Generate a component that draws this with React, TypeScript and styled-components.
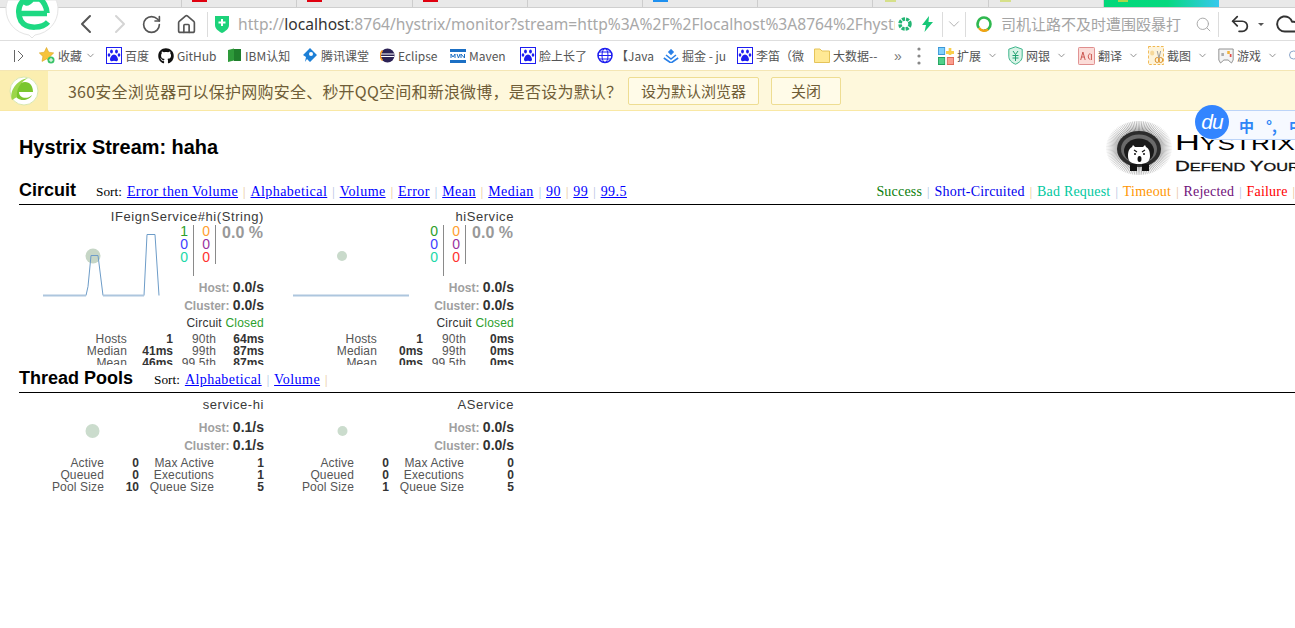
import React from "react";
import styled, { createGlobalStyle } from "styled-components";
import { ChevronLeft, ChevronRight, ChevronDown, RotateCw, Home, Search, Undo2, Cloud } from "lucide-react";
import { FaGithub } from "react-icons/fa";

const Global = createGlobalStyle`
  html, body { margin: 0; padding: 0; background: #fff; overflow: hidden; }
  body { width: 1295px; height: 628px; font-family: "Liberation Sans", Arial, sans-serif; }
  * { box-sizing: border-box; }
`;

const CJK = `"Noto Sans CJK SC", "Noto Sans", sans-serif`;

const Shell = styled.div`
  position: relative;
  width: 1295px;
  height: 628px;
  overflow: hidden;
`;

/* ---------- tab strip ---------- */
const TabStrip = styled.div`
  display: flex;
  height: 8px;
  padding-left: 67px;
  background: #e9e9e9;
  border-bottom: 1px solid #cfcfcf;
`;
const Tab = styled.div<{ $active?: boolean }>`
  position: relative;
  flex: none;
  width: 115.2px;
  height: 7px;
  border-right: ${(p) => (p.$active ? "0" : "1px solid #cdcdcd")};
  background: ${(p) => (p.$active ? "linear-gradient(90deg,#02d87a 0%,#06d97f 55%,#38c8ee 100%)" : "transparent")};
`;
const TabFavicon = styled.span<{ $c: string; $left: number; $w: number }>`
  position: absolute;
  top: 0;
  left: ${(p) => p.$left}px;
  width: ${(p) => p.$w}px;
  height: 1.5px;
  background: ${(p) => p.$c};
`;

/* ---------- toolbar ---------- */
const Toolbar = styled.div`
  display: flex;
  align-items: center;
  height: 33px;
  padding-left: 76px;
  background: #fff;
  border-bottom: 1px solid #dedede;
  color: #555;
`;
const NavButton = styled.div<{ $w: number; $c?: string }>`
  display: flex;
  flex: none;
  align-items: center;
  justify-content: center;
  width: ${(p) => p.$w}px;
  color: ${(p) => p.$c || "#555"};
  & > svg { flex: none; }
`;
const VDivider = styled.div<{ $ml?: number }>`
  flex: none;
  width: 1px;
  height: 25px;
  margin-left: ${(p) => p.$ml || 0}px;
  background: #dcdcdc;
`;
const ShieldWrap = styled.div`
  display: flex;
  flex: none;
  width: 23px;
  margin-left: 7px;
`;
const Url = styled.div`
  flex: none;
  width: 657px;
  overflow: hidden;
  white-space: nowrap;
  font-family: "Noto Sans", sans-serif;
  font-size: 15.6px;
  line-height: 20px;
  color: #a8a8a8;
`;
const UrlHost = styled.span`
  color: #333;
`;
const UrlTools = styled.div`
  display: flex;
  flex: none;
  align-items: center;
  gap: 10px;
  margin-left: 3px;
  width: 44px;
`;
const SearchBox = styled.div`
  display: flex;
  flex: none;
  align-items: center;
  width: 252px;
  padding-left: 9px;
`;
const SearchText = styled.span`
  flex: none;
  margin-left: 8px;
  width: 188px;
  overflow: hidden;
  white-space: nowrap;
  font-family: ${CJK};
  font-size: 15px;
  line-height: 20px;
  color: #a4a4a4;
`;
const Caret = styled.span`
  flex: none;
  width: 0;
  height: 0;
  border-left: 3px solid transparent;
  border-right: 3px solid transparent;
  border-top: 3px solid #555;
`;

/* ---------- bookmarks ---------- */
const BookmarkBar = styled.div`
  display: flex;
  align-items: center;
  height: 29px;
  background: #fff;
`;
const BarToggle = styled.div`
  display: flex;
  flex: none;
  width: 39px;
  padding-left: 13px;
`;
const Bookmark = styled.div<{ $w: number }>`
  display: flex;
  flex: none;
  align-items: center;
  gap: 3px;
  width: ${(p) => p.$w}px;
  font-family: ${CJK};
  font-size: 12px;
  color: #555;
  white-space: nowrap;
  overflow: hidden;
`;
const IconSlot = styled.span`
  display: flex;
  flex: none;
  width: 16px;
  height: 17px;
  align-items: center;
  justify-content: center;
`;
const More = styled.div<{ $w: number }>`
  display: flex;
  flex: none;
  justify-content: center;
  width: ${(p) => p.$w}px;
  font-family: "Liberation Sans", sans-serif;
  font-size: 14px;
  color: #777;
`;
const Tool = styled.div<{ $w: number }>`
  display: flex;
  align-items: center;
  gap: 3px;
  flex: none;
  width: ${(p) => p.$w}px;
  font-family: ${CJK};
  font-size: 12px;
  color: #555;
  white-space: nowrap;
`;
const ToolChevron = styled.span<{ $ml: number }>`
  display: flex;
  margin-left: ${(p) => p.$ml}px;
  color: #888;
`;

/* ---------- info bar ---------- */
const InfoBar = styled.div`
  display: flex;
  align-items: center;
  height: 41px;
  background: #fef8dc;
  border-top: 1px solid #f4e6b4;
  border-bottom: 1px solid #f9e8a4;
`;
const InfoIcon = styled.div`
  display: flex;
  flex: none;
  align-items: center;
  justify-content: center;
  width: 48px;
  height: 100%;
  background: #fbeeb0;
`;
const InfoText = styled.div`
  flex: none;
  margin-left: 20px;
  width: 560px;
  font-family: ${CJK};
  font-size: 16px;
  letter-spacing: 0.22px;
  color: #6f5d37;
  white-space: nowrap;
`;
const InfoButton = styled.div<{ $w: number }>`
  display: flex;
  flex: none;
  align-items: center;
  justify-content: center;
  width: ${(p) => p.$w}px;
  height: 28px;
  margin-right: 12px;
  background: #fffbe8;
  border: 1px solid #eedd92;
  border-radius: 2px;
  font-family: ${CJK};
  font-size: 15px;
  color: #6f5d37;
`;

/* ---------- hystrix page ---------- */
const Header = styled.div`
  display: flex;
  align-items: flex-start;
  justify-content: space-between;
  height: 67px;
  padding-left: 19px;
`;
const Title = styled.h2`
  margin: 24px 0 0;
  font-size: 19.9px;
  line-height: 24px;
  font-weight: bold;
  color: #000;
`;
const LogoSvg = styled.svg`
  display: block;
  flex: none;
  margin-top: 7px;
`;
const Menu = styled.div<{ $h: number }>`
  display: flex;
  align-items: center;
  height: ${(p) => p.$h}px;
  margin-left: 19px;
  border-bottom: 1px solid #000;
  font-family: "Liberation Serif", "Times New Roman", serif;
  font-size: 13.3px;
  white-space: nowrap;
`;
const MenuTitle = styled.h3<{ $w: number }>`
  margin: 0 0 2px;
  width: ${(p) => p.$w}px;
  font-family: "Liberation Sans", Arial, sans-serif;
  font-size: 18px;
  line-height: 22px;
  font-weight: bold;
  color: #000;
  flex: none;
`;
const Sort = styled.div`
  margin-top: 2px;
  color: #000;
`;
const SortLabel = styled.span`
  margin-right: 5px;
`;
const MenuLink = styled.a`
  color: #00f;
  font-size: 14px;
  letter-spacing: 0.44px;
  text-decoration: underline;
`;
const Sep = styled.span<{ $c: string }>`
  margin: 0 5px;
  color: ${(p) => p.$c};
  font-size: 12px;
`;
const Legend = styled.div`
  margin-left: auto;
  margin-right: -5px;
  margin-top: 2px;
`;
const LegendItem = styled.span<{ $c: string }>`
  color: ${(p) => p.$c};
  font-size: 14px;
  letter-spacing: 0.2px;
`;
const Monitors = styled.div<{ $h: number }>`
  display: flex;
  height: ${(p) => p.$h}px;
  overflow: hidden;
  margin-left: 19px;
`;
const Card = styled.div`
  width: 250px;
  padding-right: 5px;
  overflow: hidden;
  flex: none;
  color: #333;
`;
const CardTitle = styled.div`
  height: 14px;
  margin-top: 5px;
  text-align: right;
  font-size: 13px;
  line-height: 14px;
  letter-spacing: 0.57px;
  color: #3a3a3a;
  white-space: nowrap;
`;
const Mid = styled.div`
  display: flex;
  height: 108px;
`;
const ChartSvg = styled.svg`
  display: block;
  flex: none;
`;
const DataCol = styled.div`
  flex: 1;
  display: flex;
  flex-direction: column;
  align-items: flex-end;
`;
const Counters = styled.div`
  display: flex;
  height: 52px;
  width: 100%;
  justify-content: flex-end;
  margin-top: 1px;
`;
const CounterCol = styled.div<{ $h: number; $w: number }>`
  width: ${(p) => p.$w}px;
  height: ${(p) => p.$h}px;
  padding-right: 5px;
  text-align: right;
  border-right: 1px solid #8a8a8a;
  font-size: 14px;
  line-height: 13px;
`;
const Num = styled.div<{ $c: string }>`
  color: ${(p) => p.$c};
`;
const Rate = styled.div`
  flex: none;
  width: 47px;
  margin-right: 1px;
  text-align: right;
  font-size: 16px;
  line-height: 16px;
  font-weight: bold;
  color: #999;
  white-space: nowrap;
`;
const RateRow = styled.div<{ $mt?: number }>`
  margin-top: ${(p) => p.$mt || 0}px;
  height: 18px;
  line-height: 18px;
  font-size: 14px;
  font-weight: bold;
  color: #333;
  white-space: nowrap;
`;
const RateLabel = styled.span`
  font-size: 12px;
  color: #a0a0a0;
`;
const CircuitState = styled.div`
  margin-top: 1px;
  font-size: 12px;
  line-height: 16px;
  letter-spacing: 0.2px;
  color: #333;
  white-space: nowrap;
`;
const Closed = styled.span`
  color: #2ca02c;
`;
const Stats = styled.div<{ $cols: string; $mt?: number }>`
  display: grid;
  grid-template-columns: ${(p) => p.$cols};
  margin-top: ${(p) => p.$mt || 0}px;
  font-size: 12px;
  line-height: 12px;
  letter-spacing: 0.15px;
  text-align: right;
  color: #555;
`;
const StatValue = styled.div`
  font-weight: bold;
  color: #333;
  letter-spacing: 0;
`;
const PoolMid = styled.div`
  display: flex;
  height: 45px;
`;
const PoolData = styled.div`
  flex: 1;
  display: flex;
  flex-direction: column;
  align-items: flex-end;
  padding-top: 6px;
`;

/* ---------- overlays ---------- */
const BrandBubble = styled.svg`
  position: absolute;
  left: 0;
  top: 0;
`;
const ImeBar = styled.div`
  position: absolute;
  left: 1212px;
  top: 110px;
  width: 90px;
  height: 30px;
  display: flex;
  align-items: center;
  gap: 12px;
  padding-left: 26px;
  background: #f6f9ff;
  border: 1px solid #bcd4f8;
  border-right: 0;
  font-family: ${CJK};
  font-size: 15px;
  font-weight: bold;
  color: #2f86f6;
  white-space: nowrap;
`;
const ImeBadge = styled.div`
  position: absolute;
  left: 1195px;
  top: 105px;
  width: 34px;
  height: 34px;
  border-radius: 50%;
  background: #3385ff;
  color: #fff;
  display: flex;
  align-items: center;
  justify-content: center;
  font-family: "Liberation Sans", sans-serif;
  font-style: italic;
  font-size: 21px;
  line-height: 30px;
  letter-spacing: -1px;
`;

/* ---------- small drawn icons ---------- */
const Paw = () => (
  <svg width="16" height="17" viewBox="0 0 16 17">
    <rect x="0.5" y="0.5" width="15" height="16" fill="#fff" stroke="#1d1df0" />
    <g fill="#1d1df0">
      <ellipse cx="5.5" cy="4.5" rx="1.4" ry="2" />
      <ellipse cx="10.5" cy="4.5" rx="1.4" ry="2" />
      <ellipse cx="3" cy="8" rx="1.3" ry="1.8" />
      <ellipse cx="13" cy="8" rx="1.3" ry="1.8" />
      <path d="M8 7.5c2 0 4 3 4 5s-2 2-4 1.3c-2 .7-4 .7-4-1.3s2-5 4-5z" />
    </g>
  </svg>
);
const IbmBook = () => (
  <svg width="15" height="15" viewBox="0 0 15 15">
    <path d="M1 2l6-1.500v12L1 14z" fill="#2e9a3a" />
    <path d="M7 1h7v12H7z" fill="#1f7f2c" />
  </svg>
);
const Tencent = () => (
  <svg width="16" height="16" viewBox="0 0 16 16">
    <path d="M8 0l7 7-7 7-3-3-2 3 1-5-3-2z" fill="#1c7fd6" />
    <circle cx="9" cy="6" r="2" fill="#fff" />
  </svg>
);
const EclipseIcon = () => (
  <svg width="15" height="15" viewBox="0 0 15 15">
    <circle cx="7.5" cy="7.500" r="7" fill="#2c2255" />
    <path d="M.5 7.500a7 7 0 0 1 2-5" stroke="#f7941e" strokeWidth="1.500" fill="none" />
    <path d="M.5 7.500a7 7 0 0 0 2 5" stroke="#f7941e" strokeWidth="1.500" fill="none" />
    <rect x="1" y="5.500" width="13" height="1" fill="#fff" />
    <rect x="1" y="8" width="13" height="1" fill="#fff" />
  </svg>
);
const MavenIcon = () => (
  <svg width="16" height="14" viewBox="0 0 16 14">
    <rect x="0" y="0" width="16" height="3" fill="#1b6fc4" />
    <rect x="0" y="11" width="16" height="3" fill="#1b6fc4" />
    <path d="M1 9V5l2 3 2-3v4M7 5l1.500 4L10 5M11 9V5l3.500 4V5" stroke="#1b6fc4" strokeWidth="1" fill="none" />
  </svg>
);
const Globe = () => (
  <svg width="16" height="17" viewBox="0 0 16 17">
    <circle cx="8" cy="8.500" r="7" fill="#fff" stroke="#1d1df0" strokeWidth="1.500" />
    <ellipse cx="8" cy="8.500" rx="3" ry="7" fill="none" stroke="#1d1df0" />
    <path d="M1 8.500h14M2 5h12M2 12h12" stroke="#1d1df0" />
  </svg>
);
const Juejin = () => (
  <svg width="16" height="14" viewBox="0 0 16 14" fill="none" stroke="#2a80e8" strokeWidth="1.600">
    <path d="M8 1L6 3l2 2 2-2z" fill="#2a80e8" />
    <path d="M3 6l5 4 5-4M0.800 9l7.200 5 7.200-5" />
  </svg>
);
const Folder = () => (
  <svg width="16" height="15" viewBox="0 0 16 15">
    <path d="M.5 1h5.500l2 2h7.500v11.500H.5z" fill="#ffe995" stroke="#e5c45a" />
  </svg>
);
const FavStar = () => (
  <svg width="16" height="17" viewBox="0 0 16 17">
    <path d="M7.500 0.500l2.200 4.700 5 .7-3.600 3.500.9 5-4.500-2.400L3 14.400l.9-5L.3 5.900l5-.7z" fill="#f6c33b" stroke="#d9a520" strokeWidth=".6" />
    <circle cx="12" cy="13" r="3.500" fill="#3cc46a" />
    <path d="M12 11v4M10 13h4" stroke="#fff" />
  </svg>
);
const ExtIcon = () => (
  <svg width="16" height="18" viewBox="0 0 18 18" preserveAspectRatio="none">
    <rect x="0.500" y="0.500" width="7" height="7" fill="#7fd0fb" stroke="#3a97d8" />
    <rect x="0.500" y="10.500" width="7" height="7" fill="#4fd08a" stroke="#1fa25c" />
    <rect x="10.500" y="10.500" width="7" height="7" fill="#fb9e8f" stroke="#e06a58" />
    <path d="M12 1h3v3h3v3h-3v1h-3V7H9V4h3z" fill="#f9cf4c" />
  </svg>
);
const BankIcon = () => (
  <svg width="15" height="19" viewBox="0 0 15 19">
    <path d="M7.500 .8l6.700 2.400v7c0 4-3 6.500-6.700 8C3.800 16.700.8 14.200.8 10.200v-7z" fill="#d8f3e6" stroke="#3cb48a" />
    <path d="M5 5l2.500 3.500L10 5M4.500 9.500h6M4.500 12h6M7.500 8.500V15" stroke="#1fa070" fill="none" />
  </svg>
);
const TransIcon = () => (
  <svg width="17" height="18" viewBox="0 0 19 18" preserveAspectRatio="none">
    <rect x="0.500" y="0.500" width="18" height="17" rx="1" fill="#fbdcd8" stroke="#d88" />
    <path d="M3 13l2.500-8L8 13M4 10h3M14 7c-3-1-3.500 5-.3 5.500M15 7v6" stroke="#c9504a" fill="none" />
  </svg>
);
const CaptureIcon = () => (
  <svg width="16" height="19" viewBox="0 0 19 19" preserveAspectRatio="none">
    <rect x="0.500" y="0.500" width="18" height="18" fill="#fdf3da" stroke="#efb040" strokeDasharray="3 2" />
    <circle cx="5" cy="7" r="2.500" fill="#f6d89a" />
    <circle cx="11" cy="14" r="2.500" fill="none" stroke="#d98a20" />
    <circle cx="15" cy="14" r="2.500" fill="none" stroke="#d98a20" />
    <path d="M11 5l2 7M15 5l-2 7" stroke="#999" />
  </svg>
);
const GameIcon = () => (
  <svg width="16" height="18" viewBox="0 0 19 18" preserveAspectRatio="none">
    <path d="M1 2h17v11l-2 3-4-3H7l-4 3-2-3z" fill="#f4f4f4" stroke="#8a8a8a" />
    <rect x="4" y="6" width="3" height="3" fill="#aaa" />
    <rect x="11" y="4" width="3" height="3" fill="#f2b33c" />
    <rect x="14" y="7" width="2" height="3" fill="#e24b4b" />
  </svg>
);
const Shield = () => (
  <svg width="14" height="18" viewBox="0 0 14 18">
    <path d="M0 1h14v9c0 4-4 6.500-7 8-3-1.500-7-4-7-8z" fill="#1dd27a" />
    <path d="M7 4v7M3.500 7.500h7" stroke="#fff" strokeWidth="2" />
  </svg>
);
const Spinner = () => (
  <svg width="14" height="14" viewBox="0 0 14 14">
    <circle cx="7" cy="7" r="5" fill="none" stroke="#22b573" strokeWidth="3.500" strokeDasharray="3 1" />
  </svg>
);
const Bolt = () => (
  <svg width="11" height="16" viewBox="0 0 11 16">
    <path d="M7 0L0 9h4l-1.500 7L11 6H6.500z" fill="#16c777" />
  </svg>
);
const SearchLogo = () => (
  <svg width="18" height="18" viewBox="0 0 18 18" fill="none" strokeWidth="2.600">
    <path d="M9 2.500a6.500 6.500 0 0 1 0 13" stroke="#2fb84f" />
    <path d="M9 2.500a6.500 6.500 0 0 0-5 10.500" stroke="#2fb84f" />
    <path d="M4 13a6.500 6.500 0 0 0 9 1.500" stroke="#f2a413" />
  </svg>
);
const EBadge = () => (
  <svg width="32" height="34" viewBox="0 0 32 34">
    <circle cx="16" cy="17" r="14" fill="#fff" stroke="#d8e8b0" />
    <path d="M7 19c0-7 5-11 10-11 5 0 8 4 8 10H11c0 6 8 8 13 3-3 7-17 7-17-2z" fill="#7ac62e" />
    <path d="M4 26C1 18 8 6 20 4c-8 4-12 12-11 19z" fill="#9bd64a" />
  </svg>
);
const VDots = () => (
  <svg width="4" height="18" viewBox="0 0 4 18" fill="#888">
    <circle cx="2" cy="2" r="1.600" />
    <circle cx="2" cy="9" r="1.600" />
    <circle cx="2" cy="16" r="1.600" />
  </svg>
);

const Bubble = () => (
  <BrandBubble width="68" height="44" viewBox="0 0 68 44">
    <path d="M29 35C15 33 6 22 6 9 6 5 7 2 8 0h48c1 2 2 5 2 9 0 13-9 24-23 26l-3 3z" fill="#fff" stroke="#e4e4e4" />
    <path d="M19 13.500H47M48 22c-5 6-21 8-27-1-3-6-4-15 3-21M24 0c2 7 8-1 8-1h8c3 2 7 8 7 14" fill="none" stroke="#1dd982" strokeWidth="5.500" />
  </BrandBubble>
);

/* ---------- hystrix logo ---------- */
const spikes = Array.from({ length: 110 }, (_, i) => (i * Math.PI * 2) / 110);
const Logo = () => (
  <LogoSvg width="190" height="60" viewBox="0 0 190 60">
    <defs>
      <radialGradient id="quill" gradientUnits="userSpaceOnUse" cx="34" cy="30" r="33">
        <stop offset="0.55" stopColor="#444" />
        <stop offset="1" stopColor="#eee" />
      </radialGradient>
    </defs>
    <g stroke="url(#quill)" strokeWidth="0.600">
      {spikes.map((a, i) => (
        <line
          key={i}
          x1={34 + Math.cos(a) * 18}
          y1={30 + Math.sin(a) * 14}
          x2={34 + Math.cos(a) * 33}
          y2={30 + Math.sin(a) * 27}
        />
      ))}
    </g>
    <ellipse cx="34" cy="31" rx="22" ry="18" fill="#2c2c2c" />
    <ellipse cx="34" cy="31" rx="18" ry="14.500" fill="#6a6a6a" />
    <ellipse cx="34" cy="33" rx="15" ry="12.500" fill="#1a1a1a" />
    <path d="M23 38c0-6 2-8 4-9l1-2 2 2h8l2-2 1 2c2 1 4 3 4 9 0 6-4 8-11 8s-11-2-11-8z" fill="#fff" />
    <path d="M25 46h7v7h-7zM37 46h7v7h-7z" fill="#111" />
    <path d="M29 32l3 2M40 32l-3 2" stroke="#111" strokeWidth="1.200" />
    <circle cx="30" cy="36" r="1" fill="#111" />
    <circle cx="39" cy="36" r="1" fill="#111" />
    <ellipse cx="34.500" cy="41" rx="2" ry="3" fill="#111" />
    <g transform="translate(70 31.500) scale(1.500 1)">
      <text fontFamily="'Liberation Sans', sans-serif" fontSize="23" fill="#000">
        H<tspan fontSize="17.500">YSTRIX</tspan>
      </text>
    </g>
    <g transform="translate(70 52.500) scale(1.420 1)">
      <text fontFamily="'Liberation Sans', sans-serif" fontSize="14.500" fill="#111" stroke="#111" strokeWidth="0.300">
        D<tspan fontSize="11.500">EFEND </tspan>Y<tspan fontSize="11.500">OUR</tspan>
      </text>
    </g>
  </LogoSvg>
);

/* ---------- data ---------- */
const SEP_A = "#e8bd8a";
const SEP_B = "#a8bce0";

const bookmarks: { icon: React.ReactNode; text: string; w: number }[] = [
  { icon: <Paw />, text: "百度", w: 52 },
  { icon: <FaGithub size={16} color="#111" />, text: "GitHub", w: 68 },
  { icon: <IbmBook />, text: "IBM认知", w: 76 },
  { icon: <Tencent />, text: "腾讯课堂", w: 77 },
  { icon: <EclipseIcon />, text: "Eclipse", w: 71 },
  { icon: <MavenIcon />, text: "Maven", w: 70 },
  { icon: <Paw />, text: "脸上长了", w: 77 },
  { icon: <Globe />, text: "【Java", w: 66 },
  { icon: <Juejin />, text: "掘金 - ju", w: 74 },
  { icon: <Paw />, text: "李笛（微", w: 77 },
  { icon: <Folder />, text: "大数据--", w: 70 },
];
const tools: { icon: React.ReactNode; text: string }[] = [
  { icon: <ExtIcon />, text: "扩展" },
  { icon: <BankIcon />, text: "网银" },
  { icon: <TransIcon />, text: "翻译" },
  { icon: <CaptureIcon />, text: "截图" },
  { icon: <GameIcon />, text: "游戏" },
];
const tabFavs: (null | [string, number, number])[] = [
  null,
  ["#e0000f", 10, 15],
  ["#e0000f", 10, 15],
  ["#e0000f", 10, 15],
  null,
  ["#1e90f0", 10, 15],
  null,
  ["#d6e08a", 12, 11],
  ["#d6e08a", 11, 11],
];

const circuitCols = "108px 46px 43px 48px";
const poolCols = "85px 35px 75px 50px";

type CircuitData = {
  name: string;
  ok: string;
  chart: React.ReactNode;
  stats: [string, string, string, string][];
};
const circuits: CircuitData[] = [
  {
    name: "IFeignService#hi(String)",
    ok: "1",
    chart: (
      <ChartSvg width="150" height="108" viewBox="0 0 150 108">
        <circle cx="74" cy="32" r="7.500" fill="#c6d6c6" />
        <path d="M24 71.500H67l2-9 3-31h7l5 40h41l3-61h8l4 61" fill="none" stroke="#6d9cc8" strokeWidth="1" />
        <path d="M24 71.500H67M84 71.500h41" fill="none" stroke="#adc6de" strokeWidth="2" />
      </ChartSvg>
    ),
    stats: [
      ["Hosts", "1", "90th", "64ms"],
      ["Median", "41ms", "99th", "87ms"],
      ["Mean", "46ms", "99.5th", "87ms"],
    ],
  },
  {
    name: "hiService",
    ok: "0",
    chart: (
      <ChartSvg width="150" height="108" viewBox="0 0 150 108">
        <circle cx="73" cy="32" r="5" fill="#c9dacb" />
        <path d="M24 71.500H140" fill="none" stroke="#adc6de" strokeWidth="2" />
      </ChartSvg>
    ),
    stats: [
      ["Hosts", "1", "90th", "0ms"],
      ["Median", "0ms", "99th", "0ms"],
      ["Mean", "0ms", "99.5th", "0ms"],
    ],
  },
];
const pools = [
  {
    name: "service-hi",
    r: 7,
    rate: "0.1/s",
    stats: [
      ["Active", "0", "Max Active", "1"],
      ["Queued", "0", "Executions", "1"],
      ["Pool Size", "10", "Queue Size", "5"],
    ],
  },
  {
    name: "AService",
    r: 5,
    rate: "0.0/s",
    stats: [
      ["Active", "0", "Max Active", "0"],
      ["Queued", "0", "Executions", "0"],
      ["Pool Size", "1", "Queue Size", "5"],
    ],
  },
];

const StatGrid = ({ cols, rows, mt }: { cols: string; rows: string[][]; mt?: number }) => (
  <Stats $cols={cols} $mt={mt}>
    {rows.map((r) => (
      <React.Fragment key={r[0]}>
        <div>{r[0]}</div>
        <StatValue>{r[1]}</StatValue>
        <div>{r[2]}</div>
        <StatValue>{r[3]}</StatValue>
      </React.Fragment>
    ))}
  </Stats>
);

export default function App() {
  const sorts = ["Error then Volume", "Alphabetical", "Volume", "Error", "Mean", "Median", "90", "99", "99.5"];
  const legend: [string, string][] = [
    ["Success", "#0a7d0a"],
    ["Short-Circuited", "#0000ee"],
    ["Bad Request", "#00c8a0"],
    ["Timeout", "#ff9600"],
    ["Rejected", "#70107a"],
    ["Failure", "#ff0000"],
  ];
  return (
    <Shell>
      <Global />
      <TabStrip>
        {tabFavs.map((f, i) => (
          <Tab key={i}>{f && <TabFavicon $c={f[0]} $left={f[1]} $w={f[2]} />}</Tab>
        ))}
        <Tab $active>
          <TabFavicon $c="#a8d84a" $left={14} $w={10} />
        </Tab>
      </TabStrip>

      <Toolbar>
        <NavButton $w={20}><ChevronLeft size={32} strokeWidth={1.500} /></NavButton>
        <NavButton $w={48} $c="#d4d4d4"><ChevronRight size={32} strokeWidth={1.500} /></NavButton>
        <NavButton $w={14}><RotateCw size={21} strokeWidth={1.900} /></NavButton>
        <NavButton $w={56}><Home size={21} strokeWidth={1.900} /></NavButton>
        <VDivider $ml={-7} />
        <ShieldWrap><Shield /></ShieldWrap>
        <Url>
          http://<UrlHost>localhost</UrlHost>:8764/hystrix/monitor?stream=http%3A%2F%2Flocalhost%3A8764%2Fhystrix.stream
        </Url>
        <UrlTools>
          <Spinner />
          <Bolt />
        </UrlTools>
        <VDivider />
        <NavButton $w={22} $c="#aaa"><ChevronDown size={18} strokeWidth={1.200} /></NavButton>
        <VDivider />
        <SearchBox>
          <SearchLogo />
          <SearchText>司机让路不及时遭围殴暴打</SearchText>
          <NavButton $w={28} $c="#aaa"><Search size={17} strokeWidth={1.400} /></NavButton>
        </SearchBox>
        <VDivider />
        <NavButton $w={3} />
        <NavButton $w={36} $c="#333"><Undo2 size={22} strokeWidth={1.900} /></NavButton>
        <Caret />
        <NavButton $w={48} $c="#333"><Cloud size={26} strokeWidth={1.800} /></NavButton>
      </Toolbar>

      <BookmarkBar>
        <BarToggle>
          <svg width="12" height="14" viewBox="0 0 12 14" fill="none" stroke="#666">
            <path d="M1.500 1v12M5 2l5 5-5 5" />
          </svg>
        </BarToggle>
        <Bookmark $w={67}>
          <IconSlot><FavStar /></IconSlot>
          收藏
          <ToolChevron $ml={0}><ChevronDown size={11} /></ToolChevron>
        </Bookmark>
        {bookmarks.map((b) => (
          <Bookmark key={b.text} $w={b.w}>
            <IconSlot>{b.icon}</IconSlot>
            {b.text}
          </Bookmark>
        ))}
        <More $w={28}>»</More>
        <More $w={14}><VDots /></More>
        <More $w={12} />
        {tools.map((t) => (
          <Tool key={t.text} $w={70}>
            {t.icon}
            {t.text}
            <ToolChevron $ml={3}><ChevronDown size={11} /></ToolChevron>
          </Tool>
        ))}
        <Tool $w={12}><Search size={17} color="#8aa4c8" /></Tool>
      </BookmarkBar>

      <InfoBar>
        <InfoIcon><EBadge /></InfoIcon>
        <InfoText>360安全浏览器可以保护网购安全、秒开QQ空间和新浪微博，是否设为默认？</InfoText>
        <InfoButton $w={131}>设为默认浏览器</InfoButton>
        <InfoButton $w={70}>关闭</InfoButton>
      </InfoBar>

      <Header>
        <Title>Hystrix Stream: haha</Title>
        <Logo />
      </Header>

      <Menu $h={27}>
        <MenuTitle $w={77}>Circuit</MenuTitle>
        <Sort>
          <SortLabel>Sort:</SortLabel>
          {sorts.map((s, i) => (
            <React.Fragment key={s}>
              <MenuLink>{s}</MenuLink>
              {i < sorts.length - 1 && <Sep $c={i % 2 ? SEP_B : SEP_A}>|</Sep>}
            </React.Fragment>
          ))}
        </Sort>
        <Legend>
          {legend.map(([t, c], i) => (
            <React.Fragment key={t}>
              <LegendItem $c={c}>{t}</LegendItem>
              <Sep $c={i % 2 ? SEP_A : SEP_B}>|</Sep>
            </React.Fragment>
          ))}
        </Legend>
      </Menu>

      <Monitors $h={160}>
        {circuits.map((c) => (
          <Card key={c.name}>
            <CardTitle>{c.name}</CardTitle>
            <Mid>
              {c.chart}
              <DataCol>
                <Counters>
                  <CounterCol $w={22} $h={51}>
                    <Num $c="#2ca02c">{c.ok}</Num>
                    <Num $c="#4040ff">0</Num>
                    <Num $c="#20d8a8">0</Num>
                  </CounterCol>
                  <CounterCol $w={22} $h={39}>
                    <Num $c="#ffa030">0</Num>
                    <Num $c="#9932a0">0</Num>
                    <Num $c="#ff3030">0</Num>
                  </CounterCol>
                  <Rate>0.0 %</Rate>
                </Counters>
                <RateRow $mt={1}><RateLabel>Host: </RateLabel>0.0/s</RateRow>
                <RateRow><RateLabel>Cluster: </RateLabel>0.0/s</RateRow>
                <CircuitState>Circuit <Closed>Closed</Closed></CircuitState>
              </DataCol>
            </Mid>
            <StatGrid cols={circuitCols} rows={c.stats} mt={1} />
          </Card>
        ))}
      </Monitors>

      <Menu $h={28}>
        <MenuTitle $w={135}>Thread Pools</MenuTitle>
        <Sort>
          <SortLabel>Sort:</SortLabel>
          <MenuLink>Alphabetical</MenuLink>
          <Sep $c={SEP_B}>|</Sep>
          <MenuLink>Volume</MenuLink>
          <Sep $c={SEP_A}>|</Sep>
        </Sort>
      </Menu>

      <Monitors $h={110}>
        {pools.map((p) => (
          <Card key={p.name}>
            <CardTitle>{p.name}</CardTitle>
            <PoolMid>
              <ChartSvg width="150" height="45" viewBox="0 0 150 45">
                <circle cx="73.500" cy="19" r={p.r} fill="#cbdccd" />
              </ChartSvg>
              <PoolData>
                <RateRow><RateLabel>Host: </RateLabel>{p.rate}</RateRow>
                <RateRow><RateLabel>Cluster: </RateLabel>{p.rate}</RateRow>
              </PoolData>
            </PoolMid>
            <StatGrid cols={poolCols} rows={p.stats} />
          </Card>
        ))}
      </Monitors>

      <Bubble />
      <ImeBar>
        <span>中</span>
        <span>°,</span>
        <span>中</span>
      </ImeBar>
      <ImeBadge>du</ImeBadge>
    </Shell>
  );
}
